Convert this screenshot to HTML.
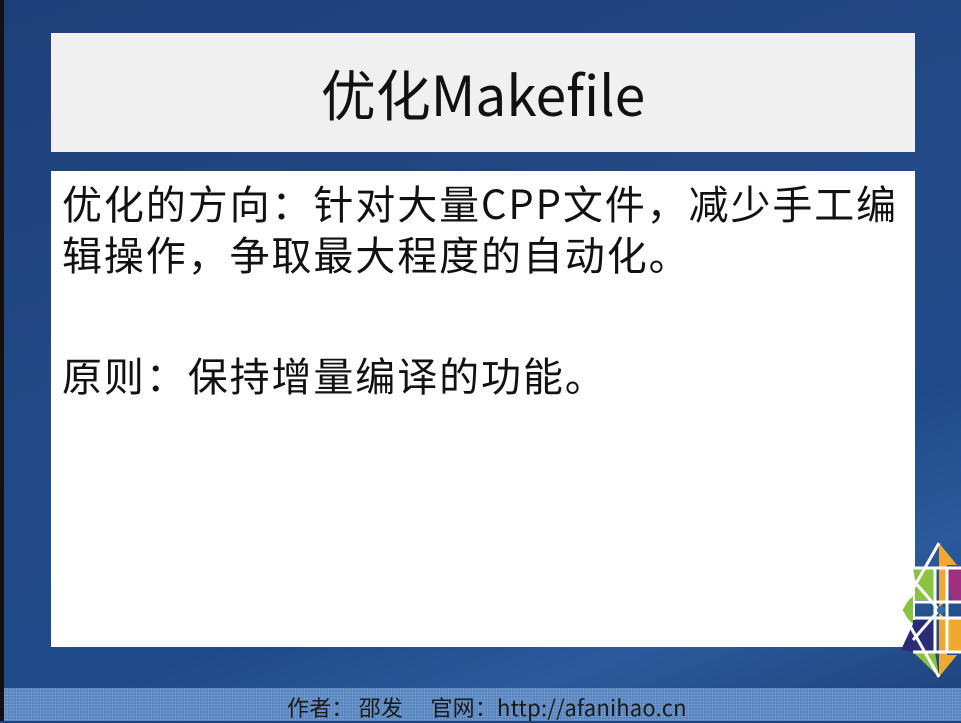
<!DOCTYPE html>
<html><head><meta charset="utf-8"><style>
body{margin:0;width:961px;height:721px;overflow:hidden;position:relative;background:#1f4580;font-family:"Liberation Sans","Noto Sans CJK SC",sans-serif}
.bg{position:absolute;left:0;top:0;width:961px;height:688px;background:linear-gradient(160deg,#1d4079 0%,#234a88 50%,#1f4a8a 70%,#2a5a9c 85%,#1f4580 100%)}
.bl{position:absolute;left:0;top:0;width:4px;height:721px;background:#111}
.ft{position:absolute;left:0;top:688px;width:961px;height:33px;background:#5a86c0;background-image:radial-gradient(#7aa0d0 0.7px,transparent 1px);background-size:3px 3px}
.ft span{position:absolute;left:287px;top:3px;font-size:22px;color:#1a1a1a;white-space:pre;font-family:"Noto Sans CJK SC",sans-serif;font-weight:400;letter-spacing:0.2px}
.title{position:absolute;left:51px;top:33px;width:864px;height:119px;background:#f0f0f0;text-align:center;line-height:119px;font-size:55px;color:#111;font-family:"Noto Sans CJK SC",sans-serif;font-weight:400}
.box{position:absolute;left:51px;top:171px;width:864px;height:476px;background:#fff}
.box p{margin:0;position:absolute;left:11px;font-size:40px;line-height:51px;color:#111;white-space:nowrap;font-family:"Noto Sans CJK SC",sans-serif;font-weight:400;letter-spacing:1.9px}
</style></head><body>
<div class="bg"></div>
<div class="title">优化Makefile</div>
<div class="box">
<p style="top:6px">优化的方向：针对大量CPP文件，减少手工编<br>辑操作，争取最大程度的自动化。</p>
<p style="top:178px">原则：保持增量编译的功能。</p>
</div>
<svg style="position:absolute;left:895px;top:540px" width="66" height="140" viewBox="0 0 66 140">
<polygon points="44,3 62,25 52,25 52,60 44,68" fill="#f0a830"/>
<polygon points="44,137 62,115 52,115 52,80 44,72" fill="#f0a830"/>
<polygon points="52,28 66,28 66,62 56,62" fill="#a0307f"/>
<polygon points="52,78 66,78 66,112 52,112" fill="#f0a830"/>
<polygon points="18,28 40,28 40,60 20,60 20,40" fill="#8ac43f"/>
<polygon points="18,80 40,80 40,112 18,112" fill="#2a2c78"/>
<polygon points="4,70 18,56 18,84" fill="#8ac43f"/>
<polygon points="44,137 40,112 18,112" fill="#8ac43f"/>
<polygon points="6,110 18,84 18,112" fill="#2a2c78"/>
<path d="M44,3 L6,70 L44,137 M18,28 L66,28 M18,112 L66,112 M44,70 L18,40 M44,70 L18,100 M20,62 L66,62 M20,78 L66,78 M40,28 L40,112 M52,28 L52,112" stroke="#fff" stroke-width="3" fill="none"/>
<circle cx="46" cy="70" r="4" fill="#2a6fb0"/>
</svg>
<div class="ft"><span>作者： 邵发　 官网：http://afanihao.cn</span></div>
<div class="bl"></div>
</body></html>
